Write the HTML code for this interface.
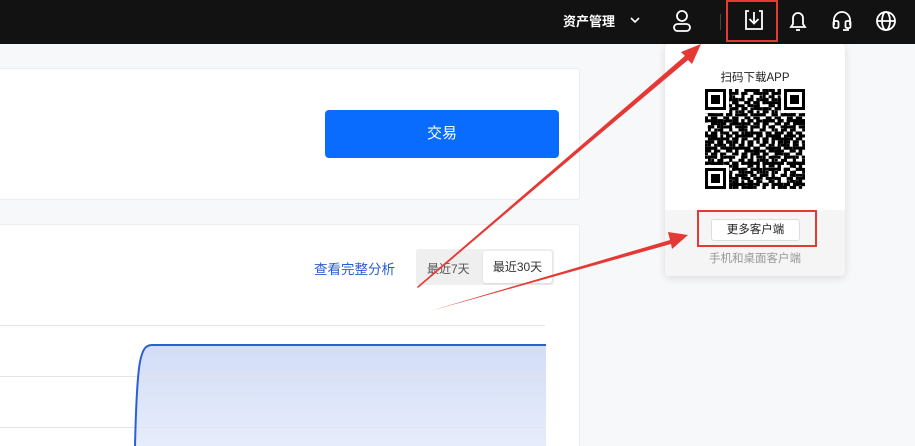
<!DOCTYPE html>
<html><head><meta charset="utf-8"><style>
*{margin:0;padding:0;box-sizing:border-box}
html,body{width:915px;height:446px;overflow:hidden}
body{background:#f7f8fa;font-family:"Liberation Sans","Noto Sans CJK SC",sans-serif;position:relative}
.top{position:absolute;left:0;top:0;width:915px;height:44px;background:#121212}
.abs{position:absolute}
.card{position:absolute;background:#fff;border:1px solid #ececec;border-radius:3px}
</style></head><body>
<div class="top"></div>
<div class="abs" style="left:563px;top:11px;color:#fff;font-size:13px;font-weight:bold">资产管理</div>
<svg class="abs" style="left:629px;top:15px" width="12" height="10"><path d="M2 3l4 4 4-4" stroke="#fff" stroke-width="1.6" fill="none"/></svg>
<svg class="abs" style="left:670px;top:8px" width="24" height="26" fill="none" stroke="#fff" stroke-width="1.8"><circle cx="12" cy="8" r="5"/><rect x="4" y="16" width="16" height="7" rx="3.5"/></svg>
<div class="abs" style="left:720px;top:14px;width:1px;height:16px;background:#444"></div>
<div class="abs" style="left:726px;top:0;width:52px;height:42px;border:2px solid #e53935"></div>
<svg class="abs" style="left:742px;top:8px" width="24" height="26" fill="none" stroke="#fff" stroke-width="1.8"><path d="M7 3H4v18h16V3h-3"/><path d="M12 4v11M7.5 11l4.5 4.5 4.5-4.5"/></svg>
<svg class="abs" style="left:786px;top:8px" width="24" height="26" fill="none" stroke="#fff" stroke-width="1.8"><path d="M5 19h14l-2-3V10a5 5 0 0 0-10 0v6z"/><path d="M10 22h4"/></svg>
<svg class="abs" style="left:830px;top:8px" width="24" height="26" fill="none" stroke="#fff" stroke-width="1.8"><path d="M4 17v-5a8 8 0 0 1 16 0v5"/><rect x="3.5" y="13" width="5" height="7" rx="1.5"/><rect x="15.5" y="13" width="5" height="7" rx="1.5"/><path d="M18 20v2h-5"/></svg>
<svg class="abs" style="left:874px;top:8px" width="24" height="26" fill="none" stroke="#fff" stroke-width="1.8"><circle cx="12" cy="13" r="9"/><ellipse cx="12" cy="13" rx="4" ry="9"/><path d="M3 13h18"/></svg>

<div class="card" style="left:-5px;top:68px;width:585px;height:132px"></div>
<div class="abs" style="left:325px;top:110px;width:234px;height:48px;background:#0a6cff;border-radius:4px;color:#fff;font-size:15px;text-align:center;line-height:48px">交易</div>

<div class="card" style="left:-5px;top:224px;width:585px;height:240px"></div>
<div class="abs" style="left:314px;top:258px;color:#2a5bd7;font-size:13.5px">查看完整分析</div>
<div class="abs" style="left:416px;top:249px;width:138px;height:36px;background:#efefef;border-radius:3px"></div>
<div class="abs" style="left:427px;top:260px;color:#555;font-size:12px">最近7天</div>
<div class="abs" style="left:483px;top:251px;width:69px;height:32px;background:#fff;border-radius:3px;box-shadow:0 1px 2px rgba(0,0,0,.1);color:#333;font-size:12px;line-height:32px;text-align:center">最近30天</div>
<svg class="abs" style="left:0;top:320px" width="546" height="126">
<defs><linearGradient id="g" x1="0" y1="0" x2="0" y2="1"><stop offset="0" stop-color="#d3ddf7"/><stop offset="1" stop-color="#e6ecfb"/></linearGradient></defs>
<path d="M135 126 C137 40 140 25 152 25 H546 V126Z" fill="url(#g)"/>
<path d="M0 5.5H545M0 56.5H545M0 107.5H545" stroke="#e2e4e8" stroke-width="1"/>
<path d="M135 126 C137 40 140 25 152 25 H546" stroke="#2b5fd9" stroke-width="2" fill="none"/>
</svg>

<div class="abs" style="left:665px;top:44px;width:180px;height:232px;background:#fff;border-radius:4px;box-shadow:0 2px 8px rgba(0,0,0,.12);overflow:hidden">
<div style="position:absolute;left:0;top:166px;width:180px;height:66px;background:#f5f5f5"></div>
<div style="position:absolute;top:25px;width:180px;text-align:center;font-size:11.5px;color:#222">扫码下载APP</div>
<svg style="position:absolute;left:40px;top:45px" width="100" height="100" viewBox="0 0 33 33" shape-rendering="crispEdges">
<defs><pattern id="q" width="7" height="5" patternUnits="userSpaceOnUse"><path d="M0 0h2v1H0zM3 0h1v2H3zM5 1h2v1H5zM1 2h1v2H1zM4 3h2v1H4zM0 4h1v1H0zM2 4h2v1H2zM6 4h1v1H6zM2 1h1v1H2zM5 2h1v1H5z" fill="#000"/></pattern>
<pattern id="q2" width="5" height="7" patternUnits="userSpaceOnUse"><path d="M0 0h1v1H0zM2 1h2v1H2zM4 3h1v2H4zM1 5h2v1H1zM0 3h1v1H0zM3 6h1v1H3zM2 3h1v1H2z" fill="#000"/></pattern>
<pattern id="q3" width="3" height="4" patternUnits="userSpaceOnUse"><path d="M1 0h1v1H1zM0 2h1v1H0zM2 3h1v1H2z" fill="#000"/></pattern></defs>
<rect width="33" height="33" fill="url(#q)"/><rect width="33" height="33" fill="url(#q2)"/><rect width="33" height="33" fill="url(#q3)"/>
<g><rect x="0" y="0" width="8" height="8" fill="#fff"/><rect x="25" y="0" width="8" height="8" fill="#fff"/><rect x="0" y="25" width="8" height="8" fill="#fff"/>
<path d="M0 0h7v7H0zM1 1v5h5V1z M2 2h3v3H2z M26 0h7v7h-7zM27 1v5h5V1z M28 2h3v3h-3z M0 26h7v7H0zM1 27v5h5v-5z M2 28h3v3H2z" fill="#000" fill-rule="evenodd"/></g>
</svg>
<div style="position:absolute;left:46px;top:175px;width:89px;height:22px;border:1px solid #ddd;background:#fff;border-radius:3px;font-size:11.5px;color:#222;text-align:center;line-height:20px">更多客户端</div>
<div style="position:absolute;top:206px;width:180px;text-align:center;font-size:11.5px;color:#999">手机和桌面客户端</div>
</div>
<div class="abs" style="left:697px;top:210px;width:120px;height:37px;border:2px solid #e53935"></div>

<svg class="abs" style="left:0;top:0" width="915" height="446">
<path d="M418 287 L686 57 L681 52 L701 44 L692 64 L688 60 Z" fill="#e53935"/>
<path d="M418 287 L688 58 L686 56 Z" fill="#e53935" stroke="#e53935" stroke-width="1.5" stroke-linejoin="round"/>
<path d="M430 311 L670 240 L668 232 L688 235 L672 249 L671 244 Z" fill="#e53935"/>
</svg>
</body></html>
